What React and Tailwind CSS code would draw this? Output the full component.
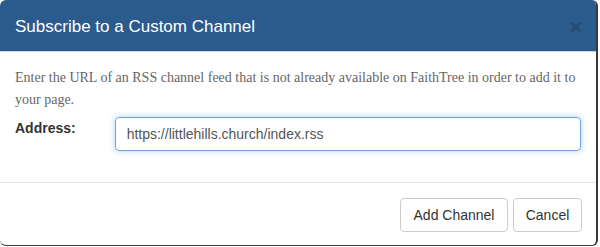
import React, { useState } from 'react';

function App() {
  const [address, setAddress] = useState('https://littlehills.church/index.rss');

  return (
    <div className="w-[600px] h-[247px] bg-white overflow-hidden">
      <div className="w-[598px] h-[246px] bg-white rounded-md border-r-2 border-b border-[#3a3a3a] overflow-hidden flex flex-col">
        {/* Kopfzeile */}
        <div className="h-[52px] bg-[#2b5a8c] border-b border-[#c9d8ea] flex items-center justify-between pl-[15px] pr-[14px] shrink-0">
          <h4 className="text-white text-[17px] font-['Liberation_Sans',Arial,sans-serif] pt-[2px]">
            Subscribe to a Custom Channel
          </h4>
          <button className="text-[#1c3d60] opacity-50 text-[21px] leading-none font-bold font-['Liberation_Sans',Arial,sans-serif] pt-[2px]">
            ×
          </button>
        </div>

        {/* Inhalt */}
        <div className="px-[15px] pt-[15px] h-[131px] border-b border-[#e5e5e5] shrink-0">
          <p className="text-[#666] text-[14px] leading-[22px] font-['Liberation_Serif','Times_New_Roman',serif]">
            Enter the URL of an RSS channel feed that is not already available on FaithTree in order to add it to your page.
          </p>
          <div className="flex items-start mt-[6px]">
            <label className="w-[100px] font-bold text-[14px] text-[#333] font-['Liberation_Sans',Arial,sans-serif] pt-[1px]">
              Address:
            </label>
            <input
              type="text"
              value={address}
              onChange={(e) => setAddress(e.target.value)}
              className="w-[468px] h-[34px] px-[11px] rounded-[4px] border border-[#6fa3d8] shadow-[0_0_6px_rgba(102,175,233,0.55)] text-[14px] text-[#555] font-['Liberation_Sans',Arial,sans-serif] outline-none"
            />
          </div>
        </div>

        {/* Fußzeile */}
        <div className="flex justify-end gap-[5px] pr-[14px] pt-[15px]">
          <button className="h-[34px] w-[108px] rounded-[4px] border border-[#ccc] bg-white text-[14px] text-[#333] font-['Liberation_Sans',Arial,sans-serif]">
            Add Channel
          </button>
          <button className="h-[34px] w-[69px] rounded-[4px] border border-[#ccc] bg-white text-[14px] text-[#333] font-['Liberation_Sans',Arial,sans-serif]">
            Cancel
          </button>
        </div>
      </div>
    </div>
  );
}

export default App;
